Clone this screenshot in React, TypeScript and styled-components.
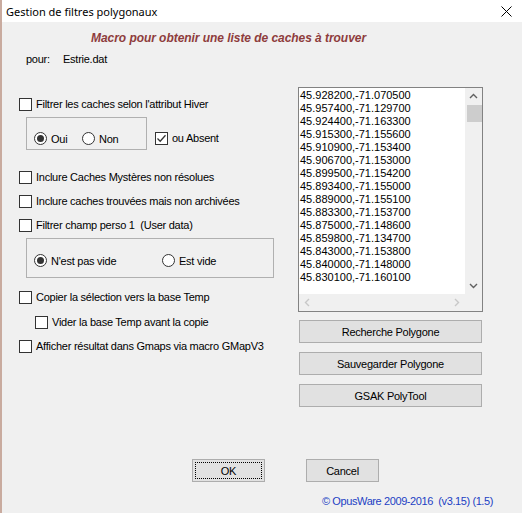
import React from "react";
import styled, { createGlobalStyle } from "styled-components";

const GlobalStyle = createGlobalStyle`
  html, body { margin: 0; padding: 0; background: #f0f0f0; }
  body { font-family: "Liberation Sans", Arial, sans-serif; font-size: 11px; color: #000; letter-spacing: -0.25px; }
  * { box-sizing: border-box; }
`;

const Frame = styled.div`
  width: 522px;
  height: 513px;
  display: flex;
  flex-direction: column;
  border-left: 2px solid #c9ab9f;
  overflow: hidden;
`;

const TitleBar = styled.div`
  height: 22px;
  background: #ffffff;
  display: flex;
  align-items: center;
  justify-content: space-between;
  padding: 0 10px 0 4px;
  font-family: "Noto Sans", "Open Sans", sans-serif;
  font-size: 11px;
  letter-spacing: 0;
  color: #000;
`;

const Body = styled.div`
  flex: 1;
  background: #f0f0f0;
  display: flex;
  flex-direction: column;
`;

const Header = styled.div`
  margin-top: 10px;
  padding-left: 89px;
  height: 13px;
  line-height: 13px;
  font-weight: bold;
  font-style: italic;
  color: #8e3c3c;
  font-size: 12px;
  letter-spacing: -0.05px;
`;

const PourRow = styled.div`
  margin-top: 8px;
  height: 13px;
  line-height: 13px;
  display: flex;
  padding-left: 24px;
`;

const PourLabel = styled.span`
  width: 37px;
`;

const Main = styled.div`
  margin-top: 21px;
  display: flex;
  padding-left: 17px;
`;

const LeftCol = styled.div`
  width: 279px;
  display: flex;
  flex-direction: column;
`;

const RightCol = styled.div`
  width: 185px;
  display: flex;
  flex-direction: column;
`;

const Row = styled.div<{ $mt: number; $ml?: number }>`
  display: flex;
  align-items: center;
  height: 16px;
  margin-top: ${(p) => p.$mt}px;
  margin-left: ${(p) => p.$ml ?? 0}px;
  white-space: pre;
`;

const Box = styled.span`
  width: 13px;
  height: 13px;
  border: 1px solid #333333;
  background: #ffffff;
  display: inline-flex;
  align-items: center;
  justify-content: center;
  margin-right: 4px;
  flex: none;
`;

const Circle = styled.span`
  width: 13px;
  height: 13px;
  border: 1px solid #333333;
  border-radius: 50%;
  background: #ffffff;
  display: inline-flex;
  align-items: center;
  justify-content: center;
  margin-right: 4px;
  flex: none;
`;

const Dot = styled.span`
  width: 7px;
  height: 7px;
  border-radius: 50%;
  background: #333333;
`;

const GroupLine = styled.div<{ $mt: number }>`
  display: flex;
  align-items: center;
  margin-top: ${(p) => p.$mt}px;
`;

const Group = styled.div<{ $w: number; $pt: number; $pb: number }>`
  margin-left: 7px;
  width: ${(p) => p.$w}px;
  border: 1px solid #b0b0b0;
  padding: ${(p) => p.$pt}px 0 ${(p) => p.$pb}px 7px;
  display: flex;
`;

const Radio = styled.label<{ $w: number }>`
  display: flex;
  align-items: center;
  width: ${(p) => p.$w}px;
  height: 13px;
  white-space: nowrap;
`;

const Inline = styled.label<{ $ml: number }>`
  display: flex;
  align-items: center;
  margin-left: ${(p) => p.$ml}px;
  margin-top: 9px;
`;

const ListBox = styled.div`
  width: 185px;
  height: 225px;
  border: 1px solid #828282;
  background: #ffffff;
  display: grid;
  grid-template-columns: 1fr 17px;
  grid-template-rows: 1fr 17px;
  letter-spacing: 0;
`;

const ListItems = styled.div`
  padding: 1px 0 0 1px;
  overflow: hidden;
`;

const Item = styled.div`
  height: 13px;
  line-height: 13px;
  white-space: nowrap;
`;

const VScroll = styled.div`
  background: #f0f0f0;
  display: flex;
  flex-direction: column;
  align-items: center;
`;

const Arrow = styled.div`
  height: 17px;
  width: 100%;
  display: flex;
  align-items: center;
  justify-content: center;
`;

const Thumb = styled.div`
  width: 15px;
  height: 17px;
  background: #cdcdcd;
  margin-left: 1px;
`;

const Track = styled.div`
  flex: 1;
`;

const HScroll = styled.div`
  background: #f0f0f0;
  display: flex;
  justify-content: space-between;
  align-items: center;
`;

const Corner = styled.div`
  background: #f0f0f0;
`;

const Button = styled.div<{ $mt: number }>`
  height: 23px;
  width: 183px;
  margin-left: 1px;
  margin-top: ${(p) => p.$mt}px;
  background: #e1e1e1;
  border: 1px solid #adadad;
  display: flex;
  align-items: center;
  justify-content: center;
`;

const Footer = styled.div`
  margin-top: 52px;
  display: flex;
  padding-left: 190px;
  gap: 41px;
`;

const DlgButton = styled.div<{ $focus?: boolean }>`
  width: 73px;
  height: 23px;
  background: #e1e1e1;
  border: 1px solid #adadad;
  display: flex;
  align-items: center;
  justify-content: center;
  position: relative;
  &::after {
    content: "";
    display: ${(p) => (p.$focus ? "block" : "none")};
    position: absolute;
    inset: 2px;
    border: 1px dotted #000;
  }
`;

const Copyright = styled.div`
  margin-top: 13px;
  padding-left: 320px;
  color: #1c3fc4;
  height: 13px;
  line-height: 13px;
  white-space: pre;
  letter-spacing: -0.4px;
`;

const Check = () => (
  <svg width="11" height="11" viewBox="0 0 11 11">
    <path d="M1.5 5.5 L4.2 8.2 L9.5 2.2" fill="none" stroke="#333" strokeWidth="1.3" />
  </svg>
);

const CheckRow = ({ label, mt, ml, checked }: { label: string; mt: number; ml?: number; checked?: boolean }) => (
  <Row $mt={mt} $ml={ml}>
    <Box>{checked && <Check />}</Box>
    <span>{label}</span>
  </Row>
);

const Chevron = ({ dir, color }: { dir: "up" | "down" | "left" | "right"; color: string }) => {
  const d = {
    up: "M1 6 L4.5 2.5 L8 6",
    down: "M1 3 L4.5 6.5 L8 3",
    left: "M6 1 L2.5 4.5 L6 8",
    right: "M3 1 L6.5 4.5 L3 8",
  }[dir];
  return (
    <svg width="9" height="9" viewBox="0 0 9 9">
      <path d={d} fill="none" stroke={color} strokeWidth="1.4" />
    </svg>
  );
};

const coords = [
  "45.928200,-71.070500",
  "45.957400,-71.129700",
  "45.924400,-71.163300",
  "45.915300,-71.155600",
  "45.910900,-71.153400",
  "45.906700,-71.153000",
  "45.899500,-71.154200",
  "45.893400,-71.155000",
  "45.889000,-71.155100",
  "45.883300,-71.153700",
  "45.875000,-71.148600",
  "45.859800,-71.134700",
  "45.843000,-71.153800",
  "45.840000,-71.148000",
  "45.830100,-71.160100",
];

export default function App() {
  return (
    <>
      <GlobalStyle />
      <Frame>
        <TitleBar>
          <span>Gestion de filtres polygonaux</span>
          <svg width="11" height="11" viewBox="0 0 11 11">
            <path d="M0.5 0.5 L10.5 10.5 M10.5 0.5 L0.5 10.5" stroke="#000" strokeWidth="1" />
          </svg>
        </TitleBar>
        <Body>
          <Header>Macro pour obtenir une liste de caches à trouver</Header>
          <PourRow>
            <PourLabel>pour:</PourLabel>
            <span>Estrie.dat</span>
          </PourRow>
          <Main>
            <LeftCol>
              <CheckRow mt={9} label="Filtrer les caches selon l'attribut Hiver" />
              <GroupLine $mt={5}>
                <Group $w={121} $pt={14} $pb={4}>
                  <Radio $w={48}>
                    <Circle><Dot /></Circle>Oui
                  </Radio>
                  <Radio $w={50}>
                    <Circle />Non
                  </Radio>
                </Group>
                <Inline $ml={8}>
                  <Box><Check /></Box>ou Absent
                </Inline>
              </GroupLine>
              <CheckRow mt={19} label="Inclure Caches Mystères non résolues" />
              <CheckRow mt={8} label="Inclure caches trouvées mais non archivées" />
              <CheckRow mt={8} label="Filtrer champ perso 1  (User data)" />
              <GroupLine $mt={5}>
                <Group $w={248} $pt={15} $pb={10}>
                  <Radio $w={128}>
                    <Circle><Dot /></Circle>N'est pas vide
                  </Radio>
                  <Radio $w={80}>
                    <Circle />Est vide
                  </Radio>
                </Group>
              </GroupLine>
              <CheckRow mt={11} label="Copier la sélection vers la base Temp" />
              <CheckRow mt={9} ml={16} label="Vider la base Temp avant la copie" />
              <CheckRow mt={8} label="Afficher résultat dans Gmaps via macro GMapV3" />
            </LeftCol>
            <RightCol>
              <ListBox>
                <ListItems>
                  {coords.map((c) => (
                    <Item key={c}>{c}</Item>
                  ))}
                </ListItems>
                <VScroll>
                  <Arrow><Chevron dir="up" color="#606060" /></Arrow>
                  <Thumb />
                  <Track />
                  <Arrow><Chevron dir="down" color="#606060" /></Arrow>
                </VScroll>
                <HScroll>
                  <Arrow style={{ width: 17 }}><Chevron dir="left" color="#c8c8c8" /></Arrow>
                  <Arrow style={{ width: 17 }}><Chevron dir="right" color="#c8c8c8" /></Arrow>
                </HScroll>
                <Corner />
              </ListBox>
              <Button $mt={8}>Recherche Polygone</Button>
              <Button $mt={9}>Sauvegarder Polygone</Button>
              <Button $mt={9}>GSAK PolyTool</Button>
            </RightCol>
          </Main>
          <Footer>
            <DlgButton $focus>OK</DlgButton>
            <DlgButton>Cancel</DlgButton>
          </Footer>
          <Copyright>{"© OpusWare 2009-2016  (v3.15) (1.5)"}</Copyright>
        </Body>
      </Frame>
    </>
  );
}
